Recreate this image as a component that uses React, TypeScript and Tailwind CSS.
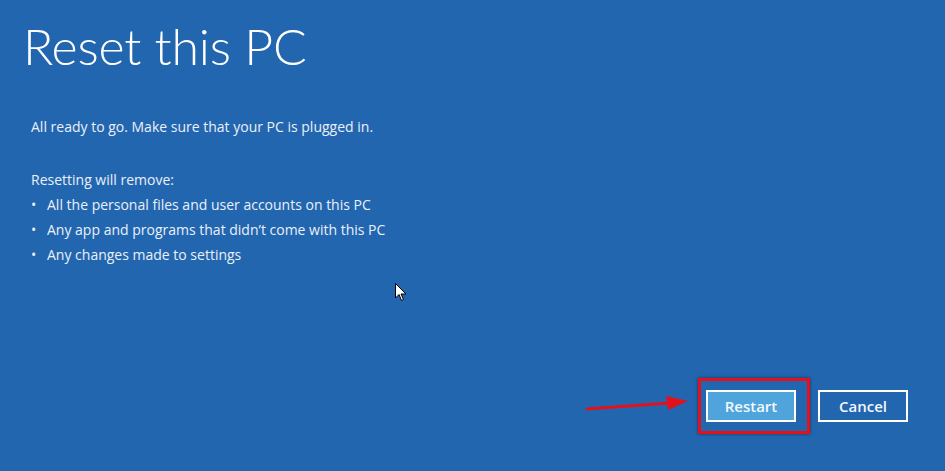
const bullets = [
  "All the personal files and user accounts on this PC",
  "Any app and programs that didn\u2019t come with this PC",
  "Any changes made to settings",
];

const App = () => {
  return (
    <div
      className="relative w-[945px] h-[471px] overflow-hidden bg-[#2366b0] text-white"
      style={{ fontFamily: '"Open Sans", "Noto Sans", sans-serif' }}
    >
      {/* Title */}
      <h1
        className="pl-[23px] pt-[10px] text-[50px] font-light leading-[72px] tracking-[-0.2px]"
        style={{ fontFamily: 'Lato, "Open Sans", sans-serif' }}
      >
        Reset this PC
      </h1>

      {/* Body */}
      <div className="pl-[31px] pt-[32px] text-[14px] text-[#eaf0f8] leading-[25px]">
        <p>All ready to go. Make sure that your PC is plugged in.</p>
        <p className="mt-[28px]">Resetting will remove:</p>
        <ul>
          {bullets.map((b) => (
            <li key={b} className="flex">
              <span className="w-[16px]">•</span>
              <span>{b}</span>
            </li>
          ))}
        </ul>
      </div>

      {/* Mouse cursor */}
      <svg className="absolute left-[395px] top-[283px]" width="12" height="19" viewBox="0 0 12 19">
        <path d="M0.5 0.5 L0.5 15 L4 11.5 L6.5 17.5 L8.5 16.5 L6 11 L11 11 Z" fill="#fff" stroke="#000" strokeWidth="1" />
      </svg>

      {/* Buttons */}
      <div className="absolute right-[37px] top-[390px] flex gap-[22px] text-[15px] font-semibold">
        <button className="w-[90px] h-[32px] border-2 border-white bg-[#4ea4db] text-[#f2f8fd]">
          Restart
        </button>
        <button className="w-[90px] h-[32px] border-2 border-white bg-[#2366b0] text-[#f2f8fd]">
          Cancel
        </button>
      </div>

      {/* Red highlight */}
      <div className="absolute left-[698px] top-[378px] w-[112px] h-[56px] border-[3px] border-[#e3111b] shadow-[0_0_3px_rgba(0,0,0,0.5)]" />

      {/* Red arrow */}
      <svg className="absolute left-[584px] top-[393px]" width="110" height="22" viewBox="0 0 110 22">
        <path d="M3 16 L86 10" stroke="#e3111b" strokeWidth="3" strokeLinecap="round" />
        <path d="M82 3 L104 8 L84 17 Z" fill="#e3111b" />
      </svg>
    </div>
  );
};

export default App;
